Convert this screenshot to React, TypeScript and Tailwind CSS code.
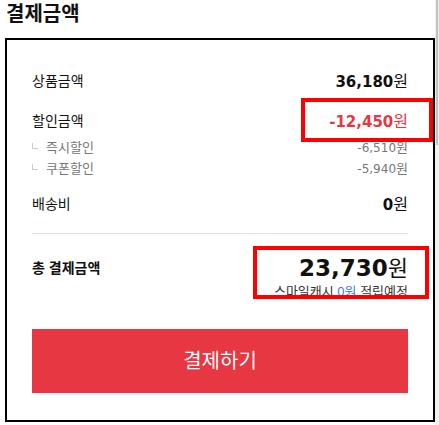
import React from "react";

const font = { fontFamily: '"Liberation Sans", "Noto Sans CJK KR", sans-serif' };
const numFont = { fontFamily: '"DejaVu Sans", "Noto Sans CJK KR", sans-serif' };
const krFont = { fontFamily: '"Noto Sans CJK KR", sans-serif' };

interface IRow {
  label: string;
  amount: string;
  red?: boolean;
}

const PriceRow: React.FC<IRow> = ({ label, amount, red }) => (
  <div className="flex h-[20px] items-center justify-between">
    <span className="text-[14px] leading-[20px] text-[#111]">{label}</span>
    <span className={`leading-[20px] ${red ? "text-[#e63743]" : "text-[#111]"}`}>
      <b className="text-[15px] font-bold" style={numFont}>
        {amount}
      </b>
      <span className="text-[16px]" style={krFont}>
        원
      </span>
    </span>
  </div>
);

const SubRow: React.FC<IRow> = ({ label, amount }) => (
  <div className="flex h-[21px] items-center justify-between text-[13px] leading-[21px] text-[#777]">
    <span className="flex items-center">
      <span className="mr-[8px] mb-[4px] inline-block h-[6px] w-[6px] border-b border-l border-[#ccc]" />
      {label}
    </span>
    <span>
      <span className="text-[12px]" style={numFont}>
        {amount}
      </span>
      <span style={krFont}>원</span>
    </span>
  </div>
);

export default function App() {
  return (
    <div className="flex h-[425px] w-[439px] bg-white" style={font}>
      <div className="relative w-[435px]">
        <h2 className="pl-[6px] pt-[1px] text-[20px] font-bold leading-[26px] text-[#111]">결제금액</h2>

        <div className="mt-[11px] ml-[5px] h-[384px] w-[430px] border-2 border-black px-[25px] pt-[31px]">
          <PriceRow label="상품금액" amount="36,180" />
          <div className="mt-[20px]">
            <PriceRow label="할인금액" amount="-12,450" red />
          </div>
          <div className="mt-[6px]">
            <SubRow label="즉시할인" amount="-6,510" />
            <SubRow label="쿠폰할인" amount="-5,940" />
          </div>
          <div className="mt-[15px]">
            <PriceRow label="배송비" amount="0" />
          </div>

          <div className="mt-[19px] h-px bg-[#e2e2e2]" />

          <div className="mt-[19px] flex h-[30px] items-center justify-between">
            <span className="text-[14px] font-bold text-[#111]">총 결제금액</span>
            <span className="text-[#111] leading-[30px]">
              <b className="text-[23px] font-bold" style={numFont}>
                23,730
              </b>
              <span className="text-[22px]" style={krFont}>
                원
              </span>
            </span>
          </div>
          <div className="mt-px text-right text-[13px] leading-[16px] text-[#333]">
            스마일캐시 <span className="text-[#3d7be0]">0원</span> 적립예정
          </div>

          <button className="mt-[29px] flex h-[64px] w-full items-center justify-center bg-[#e63743] text-[20px] text-white">
            결제하기
          </button>
        </div>

        <div className="absolute left-[301px] top-[98px] h-[44px] w-[132px] border-4 border-[#ff0000]" />
        <div className="absolute left-[253px] top-[246px] h-[53px] w-[176px] border-4 border-[#ff0000]" />
      </div>
      <div className="flex w-[4px] flex-col bg-[#f1f1f1]">
        <div className="mx-auto h-[145px] w-[2px] bg-[#c1c1c1]" />
      </div>
    </div>
  );
}
